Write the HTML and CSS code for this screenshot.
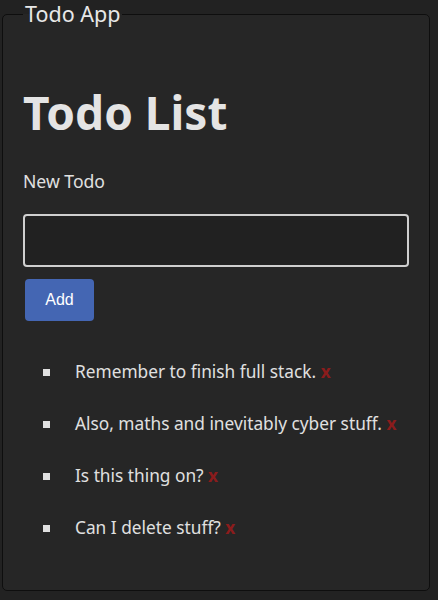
FILE: index.html
```html
<!DOCTYPE html>
<html>
<head>
<meta charset="utf-8">
<link rel="stylesheet" href="styles.css">
</head>
<body>
<fieldset class="app">
  <legend class="app-title">Todo App</legend>
  <h1 class="title">Todo List</h1>
  <label class="label" for="todo">New Todo</label>
  <input class="todo-input" id="todo" type="text">
  <button class="add-btn" type="button">Add</button>
  <ul class="todos">
    <li class="todo"><span class="bullet"></span><span class="text">Remember to finish full stack. <span class="del">x</span></span></li>
    <li class="todo"><span class="bullet"></span><span class="text">Also, maths and inevitably cyber stuff. <span class="del">x</span></span></li>
    <li class="todo"><span class="bullet"></span><span class="text">Is this thing on? <span class="del">x</span></span></li>
    <li class="todo"><span class="bullet"></span><span class="text">Can I delete stuff? <span class="del">x</span></span></li>
  </ul>
</fieldset>
</body>
</html>
```

FILE: styles.css
```css
html, body {
  margin: 0;
  padding: 0;
  background: #222222;
  height: 100%;
}
body {
  font-family: "Noto Sans", "Open Sans", sans-serif;
  color: #e0e0e0;
}
.app {
  box-sizing: border-box;
  margin: 1px 8px 0 2px;
  height: 590px;
  border: 1px solid #0e0e0e;
  border-radius: 5px;
  background: #262626;
  padding: 0 20px;
  display: flex;
  flex-direction: column;
  align-items: flex-start;
}
.app-title {
  font-size: 21.5px;
  line-height: 26px;
  padding: 0 2px;
  color: #e8e8e8;
}
.title {
  margin: 57px 0 0 0;
  font-size: 46px;
  line-height: 56px;
  font-weight: 700;
  color: #e4e4e4;
}
.label {
  margin-top: 29px;
  font-size: 17.6px;
  line-height: 24px;
}
.todo-input {
  box-sizing: border-box;
  margin: 21px 0 0 0;
  width: 386px;
  height: 53px;
  background: #212121;
  border: 2px solid #cfcfcf;
  border-radius: 4px;
}
.add-btn {
  margin: 12px 0 0 2px;
  width: 69px;
  height: 42px;
  border: none;
  border-radius: 4px;
  background: #4466b3;
  color: #ffffff;
  font-family: "Liberation Sans", Arial, sans-serif;
  font-size: 16px;
}
.todos {
  list-style: none;
  margin: 39px 0 0 0;
  padding: 0;
  display: flex;
  flex-direction: column;
  gap: 28px;
}
.todo {
  display: flex;
  align-items: center;
  font-size: 17.3px;
  line-height: 24px;
}
.bullet {
  width: 7px;
  height: 7px;
  background: #e0e0e0;
  margin: 0 25px 0 20px;
}
.del {
  color: #8b1c1c;
  font-weight: 700;
}
```
